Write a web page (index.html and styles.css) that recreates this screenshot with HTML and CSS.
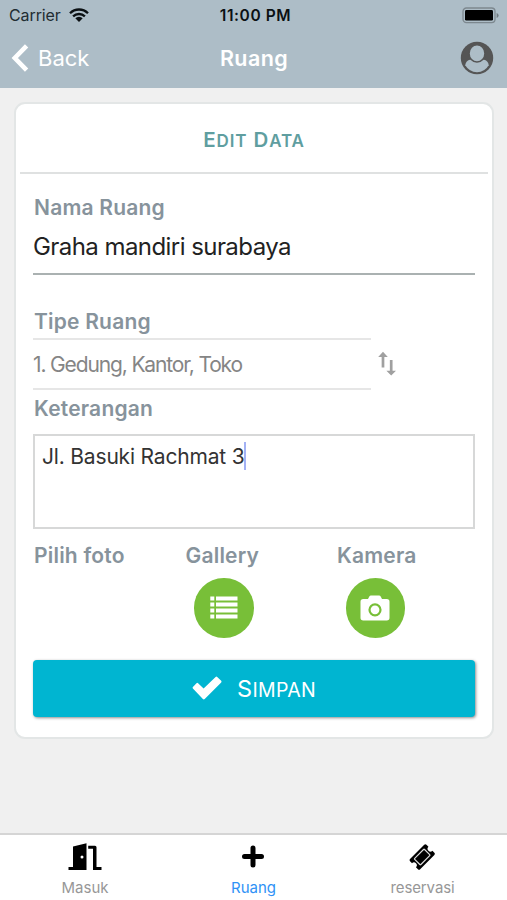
FILE: index.html
```html
<!DOCTYPE html>
<html lang="id">
<head>
<meta charset="utf-8">
<title>Ruang</title>
<link rel="stylesheet" href="styles.css">
</head>
<body>
<div class="screen">
  <header class="header">
    <div class="status">
      <div class="status-left"><span class="carrier">Carrier</span>
        <svg class="wifi" width="20" height="14" viewBox="0 0 20 14"><g fill="none" stroke="#0b1013" stroke-width="2.300"><path d="M1 5.200a12.800 12.800 0 0 1 18 0"/><path d="M4.100 8.400a8.400 8.400 0 0 1 11.800 0"/></g><path d="M6.300 10.300a5.300 5.300 0 0 1 7.400 0L10 13.900z" fill="#0b1013"/></svg>
      </div>
      <div class="clock">11:00 PM</div>
      <div class="status-right">
        <svg width="37" height="17" viewBox="0 0 37 17"><rect x="1" y="1" width="32" height="14.600" rx="3.400" fill="none" stroke="#7d888f" stroke-width="1.300"/><rect x="3" y="3" width="28" height="10.600" rx="1.400" fill="#000"/><path d="M34.600 6v5q2-.8 2-2.500t-2-2.500z" fill="#6f7a80"/></svg>
      </div>
    </div>
    <nav class="nav">
      <div class="nav-left">
        <svg width="18" height="30" viewBox="0 0 18 30"><path d="M15.600 2.800 3.800 15l11.800 12.200" fill="none" stroke="#fff" stroke-width="4.600"/></svg>
        <span class="back">Back</span>
      </div>
      <h1 class="nav-title">Ruang</h1>
      <div class="nav-right">
        <svg width="34" height="34" viewBox="0 0 34 34"><circle cx="17" cy="17" r="16.200" fill="#555"/><path d="M5.300 24.300c.3-3.700 2.500-5.300 6.200-5.800h11c3.700.5 5.900 2.100 6.200 5.800A14 14 0 0 1 17 31.300 14 14 0 0 1 5.300 24.300z" fill="#adbdc7"/><ellipse cx="17" cy="12.400" rx="8" ry="8.600" fill="#adbdc7" stroke="#555" stroke-width="1.600"/></svg>
      </div>
    </nav>
  </header>

  <main class="card">
    <h2 class="card-title">E<span class="sc">dit</span> D<span class="sc">ata</span></h2>
    <div class="form">
      <div class="label nama">Nama Ruang</div>
      <div class="input">Graha mandiri surabaya</div>
      <div class="label tipe">Tipe Ruang</div>
      <div class="select-row">
        <div class="select">1. Gedung, Kantor, Toko</div>
        <svg class="sort" width="19" height="26" viewBox="0 0 19 26"><g fill="none" stroke="#a0a0a0" stroke-width="2.700"><path d="M5 3.500v13M13.200 9v13.800"/></g><path d="M.2 6.100 5 .8l4.800 5.300zM8.400 19.800l4.800 4.800 4.800-4.800z" fill="#a0a0a0"/></svg>
      </div>
      <div class="label ket">Keterangan</div>
      <div class="textarea"><span class="area-text">Jl. Basuki Rachmat 3</span><i class="caret"></i></div>
      <div class="photo">
        <div class="label pilih">Pilih foto</div>
        <div class="col">
          <div class="label gallery">Gallery</div>
          <div class="round"><svg width="28" height="23" viewBox="0 0 28 23" fill="#fff"><path d="M.3.500h4v4h-4zM6 .5h21.500v4H6zM.3 6.500h4v4h-4zM6 6.500h21.500v4H6zM.3 12.500h4v4h-4zM6 12.500h21.500v4H6zM.3 18.500h4v4h-4zM6 18.500h21.500v4H6z"/></svg></div>
        </div>
        <div class="col">
          <div class="label kamera">Kamera</div>
          <div class="round"><svg width="30" height="26" viewBox="0 0 30 26"><path d="M3.200 4H8l1.300-2.600Q9.800.5 11 .5h8q1.200 0 1.700.9L22 4h4.800q2.700 0 2.700 2.700v16q0 2.700-2.700 2.700H3.200Q.5 25.400.5 22.700v-16Q.5 4 3.200 4z" fill="#fff"/><circle cx="15" cy="14.800" r="5.500" fill="#fff" stroke="#78bf38" stroke-width="2.200"/></svg></div>
        </div>
      </div>
      <div class="button">
        <svg width="30" height="24" viewBox="0 0 30 24"><path d="M.9 11 4.500 7.200q.8-.7 1.600 0l5.500 5.200L23.600.9q.8-.7 1.600 0l4 3.900q.7.800 0 1.600L12.700 23q-.9.800-1.800 0L.9 12.600q-.7-.8 0-1.600z" fill="#fff"/></svg>
        <span class="simpan">S<span class="sc">impan</span></span>
      </div>
    </div>
  </main>

  <footer class="tabs">
    <div class="tab">
      <svg width="36" height="30" viewBox="0 0 36 30"><path d="M6 25V4.500L19.500 1.200V28H1.500v-3zM21.200 3.800H28a1.500 1.500 0 0 1 1.500 1.500V25h5v3H26V6.800h-4.800z" fill="#000"/><circle cx="15" cy="15" r="1.500" fill="#fff"/></svg>
      <span class="masuk">Masuk</span>
    </div>
    <div class="tab active">
      <svg width="26" height="30" viewBox="0 0 26 30"><path d="M12 6v17M3.500 14.500h17" stroke="#000" stroke-width="5" stroke-linecap="round"/></svg>
      <span class="ruang">Ruang</span>
    </div>
    <div class="tab">
      <svg width="30" height="30" viewBox="0 0 30 30"><g transform="translate(14.200 15) rotate(-45) scale(.93) translate(-14 -15)"><path d="M3.200 7.300h21.600q1.700 0 1.700 1.700v3a3 3 0 0 0 0 6v3q0 1.700-1.700 1.700H3.200q-1.700 0-1.700-1.700v-3a3 3 0 0 0 0-6V9q0-1.700 1.700-1.700z" fill="#000"/><rect x="6.500" y="10.300" width="15" height="9.400" rx=".8" fill="none" stroke="#ddd" stroke-width="1.300"/></g></svg>
      <span class="reservasi">reservasi</span>
    </div>
  </footer>
</div>
</body>
</html>
```
FILE: styles.css
```css
* { box-sizing: border-box; }
body { margin: 0; font-family: Inter, "Liberation Sans", sans-serif; }
svg { display: block; flex: none; }
h1, h2 { margin: 0; }
span, .label, .select, .input { white-space: nowrap; }
.sc { font-size: .83em; text-transform: uppercase; }
.screen { width: 507px; height: 900px; display: flex; flex-direction: column; background: #f0f0f0; overflow: hidden; }

.header { height: 88px; background: #adbdc7; }
.status, .nav { display: grid; grid-template-columns: 1fr auto 1fr; align-items: center; }
.status { height: 30px; padding: 0 8px 0 9px; font-size: 16px; }
.status-left { display: flex; align-items: center; gap: 8px; }
.carrier { color: #222c32; letter-spacing: -.1px; }
.clock { font-weight: 600; font-size: 15.500px; letter-spacing: .6px; margin-left: 3px; color: #0b1013; }
.status-right, .nav-right { display: flex; justify-content: flex-end; }
.nav { height: 56px; padding: 0 13px 0 11px; color: #fff; font-size: 22px; }
.nav-left { display: flex; align-items: center; gap: 9px; }
.nav-title { font-size: 21.500px; font-weight: 600; letter-spacing: .4px; margin-left: 3px; }

.card { width: 480px; height: 637px; margin: 14px 0 0 14px; background: #fff; border: 2px solid #e3e6e6; border-radius: 11px; padding: 0 4px; }
.card-title { height: 70px; line-height: 71px; text-align: center; border-bottom: 2px solid #dfe1e1; color: #5f9ea0; font-size: 20.500px; font-weight: 600; letter-spacing: .9px; }
.form { padding: 20px 13px 0; }
.label { height: 28px; line-height: 28px; padding-left: 1px; font-size: 21px; font-weight: 600; letter-spacing: .2px; color: #87939c; }
.input { height: 53px; line-height: 50px; font-size: 24px; letter-spacing: -.56px; color: #222; border-bottom: 2px solid #aab1b1; }
.tipe { margin-top: 33px; }
.select-row { display: flex; align-items: center; gap: 7px; margin-top: 2px; }
.select { width: 338px; height: 52px; line-height: 49px; border-top: 2px solid #e6e6e6; border-bottom: 2px solid #e6e6e6; color: #858585; font-size: 21px; letter-spacing: -1.140px; }
.ket { margin-top: 5px; }
.textarea { display: flex; height: 95px; margin-top: 11px; padding: 6px 7px; border: 2px solid #d7d8d8; color: #333; font-size: 21px; line-height: 29px; letter-spacing: -.18px; }
.caret { width: 2px; height: 28px; margin-left: -1px; background: #a3b2f5; }
.photo { display: grid; grid-template-columns: 151.500px 151.500px 1fr; margin-top: 13px; }
.round { width: 59.500px; height: 59.500px; margin: 8px 0 0 9.500px; border-radius: 50%; background: #78bf38; display: flex; align-items: center; justify-content: center; }
.button { height: 57px; margin-top: 22px; display: flex; align-items: center; justify-content: center; gap: 15px; border-radius: 4px; background: #00b5d1; color: #fff; font-size: 23.500px; box-shadow: 1px 1px 3px rgba(0,0,0,.45); }
.simpan { line-height: 57px; padding-top: 3px; letter-spacing: .3px; }

.tabs { height: 67px; margin-top: auto; background: #fff; border-top: 2px solid #d5d5d5; display: grid; grid-template-columns: repeat(3, 169px); }
.tab { display: flex; flex-direction: column; align-items: center; padding-top: 7px; color: #979797; font-size: 15px; line-height: 20px; }
.tab span { margin-top: 6px; }
.masuk { padding-left: 1px; }
.reservasi { letter-spacing: -.1px; }
.active { color: #2f92f6; }
```
